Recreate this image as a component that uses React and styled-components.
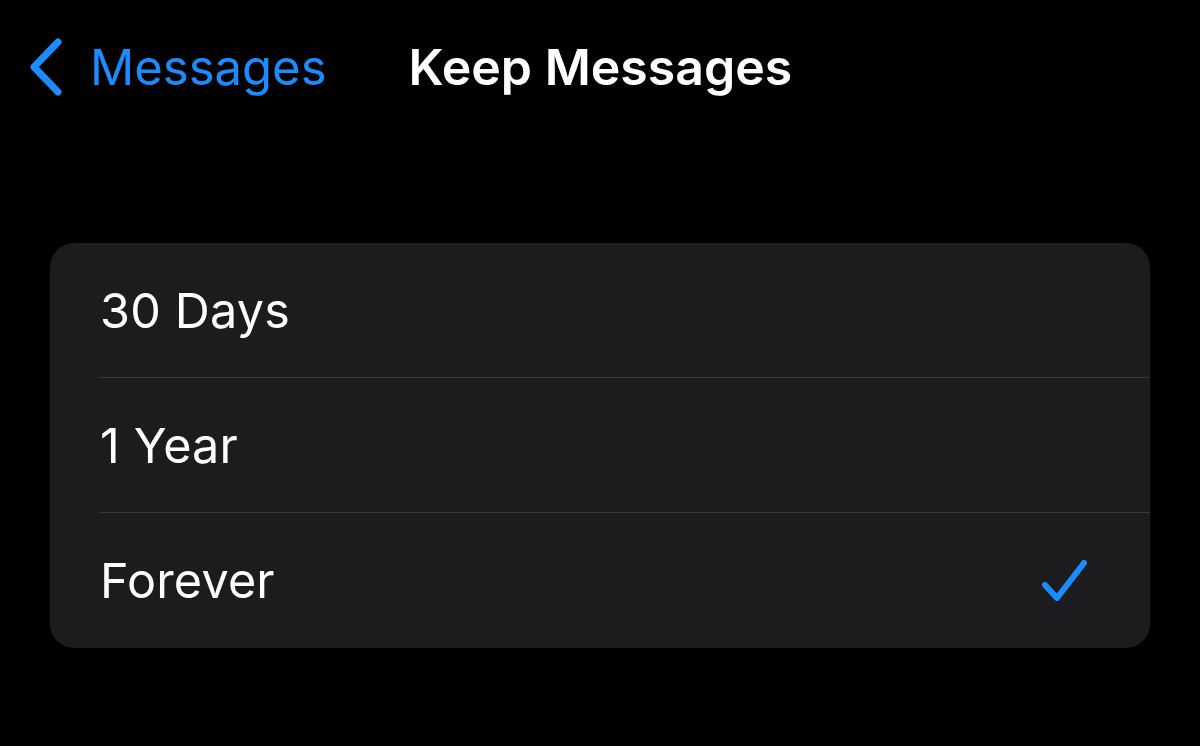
import React from "react";
import styled, { createGlobalStyle } from "styled-components";

const Global = createGlobalStyle`
  html, body { margin: 0; padding: 0; background: #000; }
  body { font-family: Inter, "Noto Sans", sans-serif; -webkit-font-smoothing: antialiased; }
`;

const Page = styled.div`
  width: 1200px;
  height: 746px;
  background: #000;
  display: flex;
  flex-direction: column;
  overflow: hidden;
`;

const Nav = styled.div`
  height: 134px;
  display: flex;
  align-items: center;
  padding-left: 26px;
  box-sizing: border-box;
`;

const Back = styled.div`
  display: flex;
  align-items: center;
  gap: 26px;
  color: #1a8cff;
  font-size: 49px;
  font-weight: 400;
`;

const Title = styled.div`
  color: #fff;
  font-size: 50px;
  font-weight: 600;
  margin-left: 82px;
  letter-spacing: 0;
`;

const Card = styled.div`
  margin: 109px 50px 0 50px;
  background: #1c1c1e;
  border-radius: 24px;
  overflow: hidden;
`;

const Row = styled.div`
  height: 135px;
  display: flex;
  align-items: center;
  justify-content: space-between;
  padding-left: 50px;
  padding-right: 60px;
  box-sizing: border-box;
  position: relative;
  &:not(:last-child)::after {
    content: "";
    position: absolute;
    left: 49px;
    right: 0;
    bottom: 0;
    height: 1.5px;
    background: #38383a;
  }
`;

const Label = styled.span`
  color: #fff;
  font-size: 48.5px;
  font-weight: 400;
  letter-spacing: 0.2px;
`;

const Chevron = () => (
  <svg width="38" height="62" viewBox="0 0 38 62">
    <path d="M32 6 L8 31 L32 56" fill="none" stroke="#1a8cff" strokeWidth="7" strokeLinecap="round" strokeLinejoin="round" />
  </svg>
);

const Check = () => (
  <svg width="50" height="48" viewBox="0 0 50 48">
    <path d="M5 28 L17 41 L44 6" fill="none" stroke="#1a8cff" strokeWidth="6" strokeLinecap="round" strokeLinejoin="round" />
  </svg>
);

const options = [
  { label: "30 Days", checked: false },
  { label: "1 Year", checked: false },
  { label: "Forever", checked: true },
];

export default function App() {
  return (
    <Page>
      <Global />
      <Nav>
        <Back>
          <Chevron />
          <span>Messages</span>
        </Back>
        <Title>Keep Messages</Title>
      </Nav>
      <Card>
        {options.map((o) => (
          <Row key={o.label}>
            <Label>{o.label}</Label>
            {o.checked && <Check />}
          </Row>
        ))}
      </Card>
    </Page>
  );
}
